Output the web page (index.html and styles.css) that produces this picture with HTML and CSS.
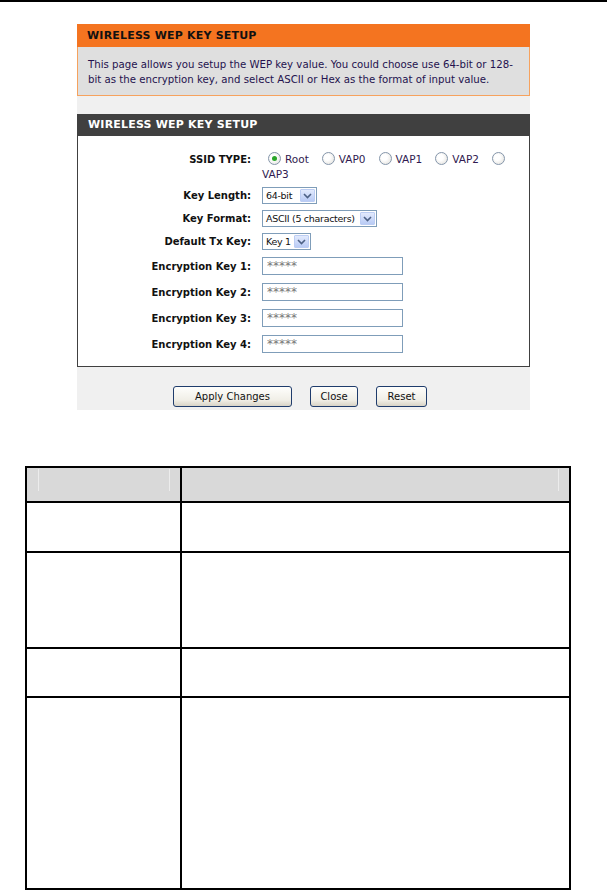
FILE: index.html
```html
<!DOCTYPE html>
<html lang="en">

<head>
    <meta charset="UTF-8">
    <meta name="viewport" content="width=device-width, initial-scale=1.0">
    <title>Wireless WEP Key Setup</title>
    <link rel="stylesheet" href="styles.css">
</head>

<body>

    <div class="top-rule"></div>

    <div class="shot">
        <div class="intro">
            <div class="intro-title">WIRELESS WEP KEY SETUP</div>
            <p class="intro-text">This page allows you setup the WEP key value. You could choose use 64-bit or 128-<br>bit as the encryption key, and select ASCII or Hex as the format of input value.</p>
        </div>

        <div class="panel">
            <div class="panel-title">WIRELESS WEP KEY SETUP</div>
            <div class="panel-body">
                <div class="row row-ssid">
                    <span class="label">SSID TYPE:</span>
                    <div class="radios">
                        <span class="radio first checked"></span>Root<span class="radio"></span>VAP0<span class="radio"></span>VAP1<span class="radio"></span>VAP2<span class="radio"></span><br>VAP3
                    </div>
                </div>
                <div class="row row-len">
                    <span class="label">Key Length:</span>
                    <div class="select select-len">64-bit<span class="select-arrow"><svg width="9" height="6" viewBox="0 0 9 6"><path d="M1 1 L4.5 4.5 L8 1" fill="none" stroke="#4d6185" stroke-width="1.6"/></svg></span></div>
                </div>
                <div class="row row-sel">
                    <span class="label">Key Format:</span>
                    <div class="select select-fmt">ASCII (5 characters)<span class="select-arrow"><svg width="9" height="6" viewBox="0 0 9 6"><path d="M1 1 L4.5 4.5 L8 1" fill="none" stroke="#4d6185" stroke-width="1.6"/></svg></span></div>
                </div>
                <div class="row row-sel">
                    <span class="label">Default Tx Key:</span>
                    <div class="select select-tx">Key 1<span class="select-arrow"><svg width="9" height="6" viewBox="0 0 9 6"><path d="M1 1 L4.5 4.5 L8 1" fill="none" stroke="#4d6185" stroke-width="1.6"/></svg></span></div>
                </div>
                <div class="row row-key first-key">
                    <span class="label">Encryption Key 1:</span>
                    <input class="key-input" type="text" value="*****" readonly>
                </div>
                <div class="row row-key">
                    <span class="label">Encryption Key 2:</span>
                    <input class="key-input" type="text" value="*****" readonly>
                </div>
                <div class="row row-key">
                    <span class="label">Encryption Key 3:</span>
                    <input class="key-input" type="text" value="*****" readonly>
                </div>
                <div class="row row-key">
                    <span class="label">Encryption Key 4:</span>
                    <input class="key-input" type="text" value="*****" readonly>
                </div>
            </div>
        </div>

        <div class="actions">
            <button class="btn btn-apply">Apply Changes</button>
            <button class="btn btn-close">Close</button>
            <button class="btn btn-reset">Reset</button>
        </div>
    </div>

    <table class="params">
        <tr class="head">
            <th class="col-name"><div class="th-inner"></div></th>
            <th class="col-desc"><div class="th-inner th-inner-right"></div></th>
        </tr>
        <tr class="r1"><td></td><td></td></tr>
        <tr class="r2"><td></td><td></td></tr>
        <tr class="r3"><td></td><td></td></tr>
        <tr class="r4"><td></td><td></td></tr>
    </table>

</body>

</html>
```

FILE: styles.css
```css
body {
    margin: 0;
    padding: 0;
    background-color: #fff;
    font-family: 'DejaVu Sans', Verdana, sans-serif;
    font-size: 10px;
    color: #000;
}

.top-rule {
    height: 2px;
    background-color: #000;
}

.shot {
    width: 453px;
    margin: 22px 0 0 77px;
    padding-bottom: 3px;
    background-color: #f0f0f0;
}

.intro-title {
    height: 23px;
    line-height: 24px;
    padding-left: 10px;
    background-color: #f47420;
    font-size: 11px;
    font-weight: bold;
    letter-spacing: 0.2px;
    color: #111;
}

.intro-text {
    margin: 0;
    padding: 10px 10px 8px;
    background-color: #dfdfdf;
    border: 1px solid #f6a25e;
    border-top: none;
    line-height: 15px;
    font-size: 10.2px;
    white-space: nowrap;
    color: #24124e;
}

.panel {
    margin-top: 18px;
}

.panel-title {
    height: 22px;
    line-height: 22px;
    padding-left: 11px;
    background-color: #404040;
    color: #fff;
    font-size: 11px;
    font-weight: bold;
    letter-spacing: 0.2px;
}

.panel-body {
    padding: 16px 0 13px;
    background-color: #fff;
    border: 1px solid #404040;
    border-top: none;
}

.row {
    display: flex;
    align-items: center;
    margin-top: 6px;
}

.label {
    width: 173px;
    margin-right: 11px;
    flex-shrink: 0;
    text-align: right;
    font-weight: bold;
    color: #111;
}

.row-ssid {
    align-items: flex-start;
    margin-top: 0;
    line-height: 15px;
}

.radios {
    font-size: 10.5px;
    color: #301a50;
}

.radio {
    display: inline-block;
    position: relative;
    width: 11px;
    height: 11px;
    margin: 0 4px 0 13px;
    vertical-align: -2px;
    border: 1px solid #8596ab;
    border-radius: 50%;
    background: radial-gradient(circle at 40% 40%, #fff 30%, #dedcd6);
}

.radio.first {
    margin-left: 6px;
}

.radio.checked::after {
    content: '';
    position: absolute;
    left: 3px;
    top: 3px;
    width: 5px;
    height: 5px;
    border-radius: 50%;
    background-color: #2aa52a;
}

.row-len {
    margin-top: 5px;
}

.select {
    display: inline-flex;
    align-items: center;
    box-sizing: border-box;
    height: 17px;
    padding-left: 3px;
    border: 1px solid #7f9db9;
    background-color: #fff;
    font-size: 9.5px;
    letter-spacing: -0.3px;
    white-space: nowrap;
    color: #111;
}

.select-len {
    width: 55px;
}

.select-fmt {
    width: 115px;
}

.select-tx {
    width: 49px;
}

.select-arrow {
    display: flex;
    align-items: center;
    justify-content: center;
    box-sizing: border-box;
    width: 15px;
    height: 13px;
    margin-left: auto;
    margin-right: 1px;
    border: 1px solid #bccdf3;
    border-radius: 1px;
    background: linear-gradient(#e2eafd, #b9cbf5);
}

.row-key {
    margin-top: 8px;
}

.row-key.first-key {
    margin-top: 7px;
}

.key-input {
    box-sizing: border-box;
    width: 141px;
    height: 18px;
    margin: 0;
    padding: 0 3px 1px 4px;
    border: 1px solid #7f9db9;
    font-family: 'DejaVu Sans', Verdana, sans-serif;
    font-size: 12px;
    line-height: 12px;
    color: #777;
}

.actions {
    display: flex;
    justify-content: center;
    gap: 18px;
    padding: 19px 7px 0 0;
}

.btn {
    box-sizing: border-box;
    height: 21px;
    padding: 0;
    border: 1px solid #1f3c6c;
    border-radius: 3px;
    background: linear-gradient(#fefefc, #f0eee6 70%, #d8d3c6);
    font-family: 'DejaVu Sans', Verdana, sans-serif;
    font-size: 10px;
    color: #111;
}

.btn-apply {
    width: 119px;
}

.btn-close {
    width: 48px;
}

.btn-reset {
    width: 51px;
}

.params {
    margin: 56px 0 0 25px;
    border-collapse: collapse;
}

.params th,
.params td {
    padding: 0;
    border: 2px solid #000;
}

.params th {
    vertical-align: top;
    background-color: #d9d9d9;
}

.col-name {
    width: 153px;
}

.col-desc {
    width: 387px;
}

.th-inner {
    height: 22px;
    margin: 1px 10px 0 11px;
    border-left: 1px solid #ececec;
    border-right: 1px solid #ececec;
}

.th-inner-right {
    border-left: none;
}

.head {
    height: 35px;
}

.r1 {
    height: 50px;
}

.r2 {
    height: 96px;
}

.r3 {
    height: 49px;
}

.r4 {
    height: 192px;
}
```
